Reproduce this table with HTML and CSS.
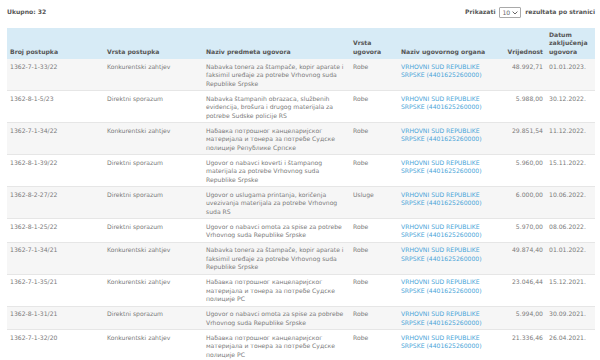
FILE: index.html
```html
<!DOCTYPE html>
<html lang="sr">
<head>
<meta charset="utf-8">
<title>Ugovori</title>
<link rel="stylesheet" href="styles.css">
</head>
<body>
<div class="page">
  <div class="topbar">
    <div class="total">Ukupno: 32</div>
    <div class="perpage">
      <span>Prikazati</span>
      <span class="select">10<svg width="6" height="4" viewBox="0 0 6 4"><path d="M0.6 0.6 L3 3 L5.4 0.6" fill="none" stroke="#555" stroke-width="0.9"/></svg></span>
      <span>rezultata po stranici</span>
    </div>
  </div>
  <table class="grid">
    <colgroup>
      <col class="c1"><col class="c2"><col class="c3"><col class="c4"><col class="c5"><col class="c6"><col class="c7">
    </colgroup>
    <thead>
      <tr>
        <th>Broj postupka</th>
        <th>Vrsta postupka</th>
        <th>Naziv predmeta ugovora</th>
        <th>Vrsta ugovora</th>
        <th>Naziv ugovornog organa</th>
        <th class="num">Vrijednost</th>
        <th>Datum zaključenja ugovora</th>
      </tr>
    </thead>
    <tbody>
      <tr>
        <td>1362-7-1-33/22</td><td>Konkurentski zahtjev</td>
        <td>Nabavka tonera za štampače, kopir aparate i faksimil uređaje za potrebe Vrhovnog suda Republike Srpske</td>
        <td>Robe</td><td><a href="#">VRHOVNI SUD REPUBLIKE SRPSKE (4401625260000)</a></td>
        <td class="num">48.992,71</td><td>01.01.2023.</td>
      </tr>
      <tr>
        <td>1362-8-1-5/23</td><td>Direktni sporazum</td>
        <td>Nabavka štampanih obrazaca, službenih evidencija, brošura i drugog materijala za potrebe Sudske policije RS</td>
        <td>Robe</td><td><a href="#">VRHOVNI SUD REPUBLIKE SRPSKE (4401625260000)</a></td>
        <td class="num">5.988,00</td><td>30.12.2022.</td>
      </tr>
      <tr>
        <td>1362-7-1-34/22</td><td>Konkurentski zahtjev</td>
        <td>Набавка потрошног канцеларијског материјала и тонера за потребе Судске полиције Републике Српске</td>
        <td>Robe</td><td><a href="#">VRHOVNI SUD REPUBLIKE SRPSKE (4401625260000)</a></td>
        <td class="num">29.851,54</td><td>11.12.2022.</td>
      </tr>
      <tr>
        <td>1362-8-1-39/22</td><td>Direktni sporazum</td>
        <td>Ugovor o nabavci koverti i štampanog materijala za potrebe Vrhovnog suda Republike Srpske</td>
        <td>Robe</td><td><a href="#">VRHOVNI SUD REPUBLIKE SRPSKE (4401625260000)</a></td>
        <td class="num">5.960,00</td><td>15.11.2022.</td>
      </tr>
      <tr>
        <td>1362-8-2-27/22</td><td>Direktni sporazum</td>
        <td>Ugovor o uslugama printanja, koričenja uvezivanja materijala za potrebe Vrhovnog suda RS</td>
        <td>Usluge</td><td><a href="#">VRHOVNI SUD REPUBLIKE SRPSKE (4401625260000)</a></td>
        <td class="num">6.000,00</td><td>10.06.2022.</td>
      </tr>
      <tr>
        <td>1362-8-1-25/22</td><td>Direktni sporazum</td>
        <td>Ugovor o nabavci omota za spise za potrebe Vrhovnog suda Republike Srpske</td>
        <td>Robe</td><td><a href="#">VRHOVNI SUD REPUBLIKE SRPSKE (4401625260000)</a></td>
        <td class="num">5.970,00</td><td>08.06.2022.</td>
      </tr>
      <tr>
        <td>1362-7-1-34/21</td><td>Konkurentski zahtjev</td>
        <td>Nabavka tonera za štampače, kopir aparate i faksimil uređaje za potrebe Vrhovnog suda Republike Srpske</td>
        <td>Robe</td><td><a href="#">VRHOVNI SUD REPUBLIKE SRPSKE (4401625260000)</a></td>
        <td class="num">49.874,40</td><td>01.01.2022.</td>
      </tr>
      <tr>
        <td>1362-7-1-35/21</td><td>Konkurentski zahtjev</td>
        <td>Набавка потрошног канцеларијског материјала и тонера за потребе Судске полиције РС</td>
        <td>Robe</td><td><a href="#">VRHOVNI SUD REPUBLIKE SRPSKE (4401625260000)</a></td>
        <td class="num">23.046,44</td><td>15.12.2021.</td>
      </tr>
      <tr>
        <td>1362-8-1-31/21</td><td>Direktni sporazum</td>
        <td>Ugovor o nabavci omota za spise za pobrebe Vrhovnog suda Republike Srpske</td>
        <td>Robe</td><td><a href="#">VRHOVNI SUD REPUBLIKE SRPSKE (4401625260000)</a></td>
        <td class="num">5.994,00</td><td>30.09.2021.</td>
      </tr>
      <tr>
        <td>1362-7-1-32/20</td><td>Konkurentski zahtjev</td>
        <td>Набавка потрошног канцеларијског материјала и тонера за потребе Судске полиције РС</td>
        <td>Robe</td><td><a href="#">VRHOVNI SUD REPUBLIKE SRPSKE (4401625260000)</a></td>
        <td class="num">21.336,46</td><td>26.04.2021.</td>
      </tr>
    </tbody>
  </table>
</div>
</body>
</html>
```
FILE: styles.css
```css
html, body {
  margin: 0;
  padding: 0;
  background: #ffffff;
}
body {
  font-family: "DejaVu Sans", Verdana, sans-serif;
  font-size: 6.1px;
  line-height: 8.5px;
  color: #7a7a7a;
}
.page {
  padding: 0 5px 0 7px;
}
.topbar {
  display: flex;
  justify-content: space-between;
  align-items: center;
  height: 13px;
  padding-top: 6px;
  margin-bottom: 9px;
}
.total {
  font-weight: bold;
  color: #555555;
}
.perpage {
  display: flex;
  align-items: center;
  gap: 4px;
  font-weight: bold;
  color: #555555;
}
.select {
  display: inline-flex;
  align-items: center;
  gap: 2px;
  height: 9px;
  padding: 0 2px;
  border: 1px solid #a9a9a9;
  border-radius: 1px;
  font-weight: normal;
  color: #666666;
  line-height: 9px;
}
.grid {
  width: 100%;
  border-collapse: collapse;
  table-layout: fixed;
}
.c1 { width: 97px; }
.c2 { width: 99px; }
.c3 { width: 147px; }
.c4 { width: 48px; }
.c5 { width: 99px; }
.c6 { width: 49px; }
.c7 { width: 49px; }
.grid th {
  background: #d7ebf6;
  color: #555555;
  font-weight: bold;
  text-align: left;
  vertical-align: bottom;
  padding: 2px 3px 3px 3px;
  height: 26px;
}
.grid td {
  vertical-align: top;
  padding: 3.5px 3px 2px 3px;
  border-top: 1px solid #e6e6e6;
}
.grid tbody tr:nth-child(odd) td {
  background: #f6f6f6;
}
.grid tbody tr:first-child td {
  border-top: none;
}
.grid .num {
  text-align: right;
}
.grid a {
  color: #4aa5d8;
  text-decoration: none;
}
```
